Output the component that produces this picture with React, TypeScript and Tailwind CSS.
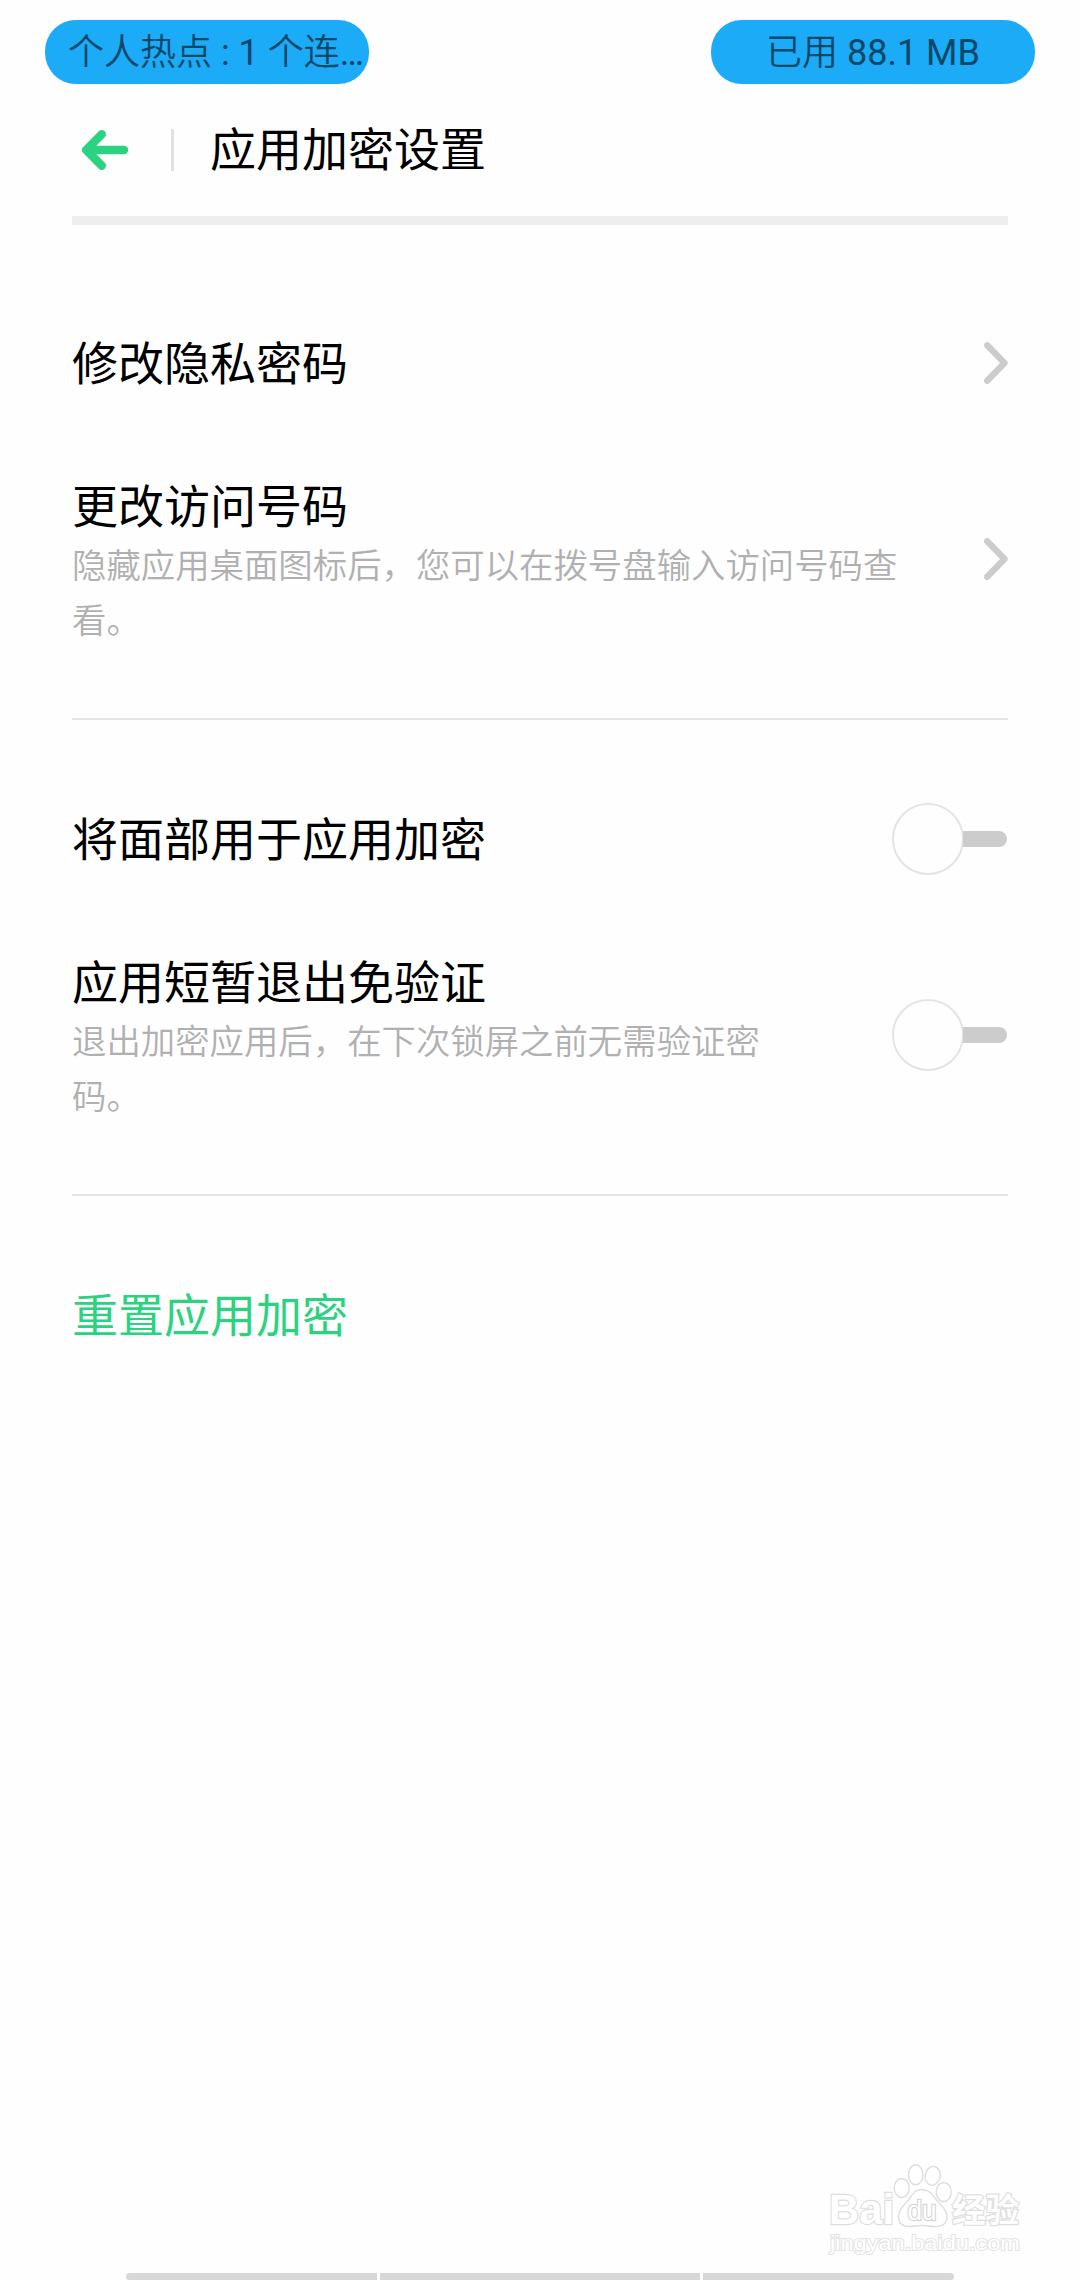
import type { ReactNode } from "react";

const navSegments = ["w-[251px] rounded-l-full", "w-[320px]", "w-[251px] rounded-r-full"];

function Chevron() {
  return (
    <svg width="24" height="42" viewBox="0 0 24 42" fill="none" className="shrink-0">
      <path d="M3.2 3.2 20.5 21 3.2 38.8" stroke="#cccccc" strokeWidth="6.4" strokeLinecap="round" strokeLinejoin="round" />
    </svg>
  );
}

function Toggle() {
  return (
    <button role="switch" aria-checked="false" className="flex items-center shrink-0 mr-px">
      <span className="size-[72px] rounded-full border-2 border-[#e4e4e4]" />
      <span className="w-[44px] h-4 -ml-px rounded-r-full bg-[#cccccc]" />
    </button>
  );
}

type RowProps = {
  title: string;
  desc?: string;
  descWidth?: string;
  accent?: boolean;
  children?: ReactNode;
};

function Row({ title, desc, descWidth = "", accent, children }: RowProps) {
  return (
    <div className={`flex items-center justify-between ${desc ? "h-[250px]" : "h-[142px]"}`}>
      <div className={desc ? "pt-[5px]" : "pt-[2px]"}>
        <h2 className={`text-[46px] leading-[64px] font-normal ${accent ? "text-[#2bd380]" : "text-black"}`}>{title}</h2>
        {desc && <p className={`text-[34.4px] leading-[55px] font-[350] text-[#b0b0b0] ${descWidth}`}>{desc}</p>}
      </div>
      {children}
    </div>
  );
}

function Watermark() {
  return (
    <div className="absolute left-[828px] top-[2163px] w-[196px] h-[96px]">
      <svg width="196" height="96" viewBox="0 0 196 96" fill="#ffffff" stroke="#dedede" strokeWidth="1.4">
        <ellipse cx="73.7" cy="25" rx="7.5" ry="9.5" />
        <ellipse cx="87.7" cy="11.8" rx="7.2" ry="10" />
        <ellipse cx="104.7" cy="12.8" rx="7.5" ry="9.5" transform="rotate(12 104.7 12.8)" />
        <ellipse cx="115.7" cy="29" rx="7.5" ry="9.5" />
        <path d="M94 26.5c8 0 11 6 15 11s10 8.5 10 16c0 7-5 10-12 10-5 0-8-1-13-1s-8 1-13 1c-7 0-10.5-4-10.5-10.5C70.5 45 78 41 82 35s6-8.5 12-8.5Z" />
        <g fontFamily="'Liberation Sans', sans-serif" fontWeight="700" style={{ paintOrder: "stroke" }} strokeWidth="2.4">
          <text x="1" y="61" fontSize="42" textLength="65" lengthAdjust="spacingAndGlyphs">Bai</text>
          <text x="79.5" y="57" fontSize="27" fontWeight="400" stroke="#d6d6d6" textLength="29" lengthAdjust="spacingAndGlyphs">du</text>
          <text x="124" y="59" fontSize="33" textLength="67" lengthAdjust="spacingAndGlyphs" fontFamily="'Noto Sans CJK SC', sans-serif">经验</text>
          <text x="2" y="86.5" fontSize="21" fontWeight="400" strokeWidth="2" stroke="#e4e4e4" textLength="190" lengthAdjust="spacingAndGlyphs">jingyan.baidu.com</text>
        </g>
      </svg>
    </div>
  );
}

export default function App() {
  return (
    <div
      lang="zh-CN"
      className="relative w-[1080px] h-[2280px] overflow-hidden flex flex-col bg-[#fefefe] font-[Roboto,'Noto_Sans_CJK_SC',sans-serif]"
    >
      <div className="flex justify-between pt-5 px-[45px] text-[36px] leading-[67px] font-normal text-[#0b4767]">
        <div className="w-[324px] h-16 rounded-[31px] bg-[#1cabf7] pl-[23px] whitespace-pre">
          <span className="font-[350]">个人热点</span> : 1 <span className="font-[350]">个连</span>…
        </div>
        <div className="w-[324px] h-16 rounded-[31px] bg-[#1cabf7] text-center">
          <span className="font-[350]">已用</span> 88.1 MB
        </div>
      </div>

      <header className="flex items-center h-[132px] mx-[72px] pl-[9px]">
        <svg width="48" height="42" viewBox="0 0 48 42" fill="none" stroke="#2bd380" strokeWidth="8.4" strokeLinecap="round" strokeLinejoin="round">
          <path d="M20.8 5.2 5.2 21l15.6 15.8M7 21h36" />
        </svg>
        <span className="w-[3px] h-[42px] ml-[42px] bg-[#e2e2e2]" />
        <h1 className="ml-9 text-[46px] leading-[64px] font-normal text-black">应用加密设置</h1>
      </header>
      <div className="h-[9px] mx-[72px] bg-[#eeeeee]" />

      <main className="mx-[72px]">
        <section className="pt-[67px] pb-[34px] border-b-2 border-[#e5e5e5]">
          <Row title="修改隐私密码">
            <Chevron />
          </Row>
          <Row title="更改访问号码" desc="隐藏应用桌面图标后，您可以在拨号盘输入访问号码查看。" descWidth="w-[840px]">
            <Chevron />
          </Row>
        </section>
        <section className="pt-12 pb-[34px] border-b-2 border-[#e5e5e5]">
          <Row title="将面部用于应用加密">
            <Toggle />
          </Row>
          <Row title="应用短暂退出免验证" desc="退出加密应用后，在下次锁屏之前无需验证密码。" descWidth="w-[705px]">
            <Toggle />
          </Row>
        </section>
        <section className="pt-12">
          <Row title="重置应用加密" accent />
        </section>
      </main>

      <div className="flex gap-[3px] mt-auto ml-[126px] h-[7px]">
        {navSegments.map((s, i) => (
          <span key={i} className={`h-full bg-[#d8d8d8] ${s}`} />
        ))}
      </div>

      <Watermark />
    </div>
  );
}
